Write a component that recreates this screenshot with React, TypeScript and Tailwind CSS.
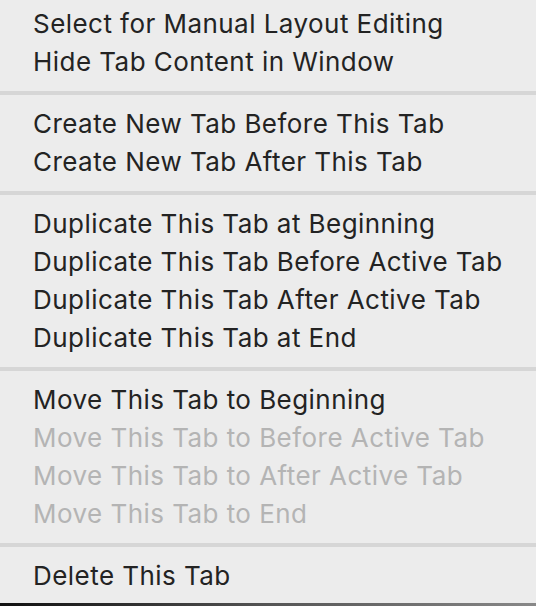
import React from "react";

type Item = { label: string; disabled?: boolean };

const groups: Item[][] = [
  [{ label: "Select for Manual Layout Editing" }, { label: "Hide Tab Content in Window" }],
  [{ label: "Create New Tab Before This Tab" }, { label: "Create New Tab After This Tab" }],
  [
    { label: "Duplicate This Tab at Beginning" },
    { label: "Duplicate This Tab Before Active Tab" },
    { label: "Duplicate This Tab After Active Tab" },
    { label: "Duplicate This Tab at End" },
  ],
  [
    { label: "Move This Tab to Beginning" },
    { label: "Move This Tab to Before Active Tab", disabled: true },
    { label: "Move This Tab to After Active Tab", disabled: true },
    { label: "Move This Tab to End", disabled: true },
  ],
  [{ label: "Delete This Tab" }],
];

export default function App() {
  return (
    <div
      className="w-[536px] h-[606px] bg-[#ececec] flex flex-col overflow-hidden"
      style={{ fontFamily: "Inter, 'Noto Sans', sans-serif" }}
    >
      <div className="flex flex-col pt-[5px] flex-1">
        {groups.map((g, gi) => (
          <React.Fragment key={gi}>
            {gi > 0 && (
              <div className="h-[24px] flex items-center">
                <div className="h-[4px] w-full bg-[#d6d6d6]" />
              </div>
            )}
            {g.map((it) => (
              <div
                key={it.label}
                className={
                  "h-[38px] flex items-center pl-[33px] text-[26px] leading-none tracking-[0.45px] " +
                  (it.disabled ? "text-[#b4b4b4]" : "text-[#232323]")
                }
              >
                {it.label}
              </div>
            ))}
          </React.Fragment>
        ))}
      </div>
      <div className="h-[3px] bg-gradient-to-r from-[#111] via-[#555] to-[#888]" />
    </div>
  );
}
